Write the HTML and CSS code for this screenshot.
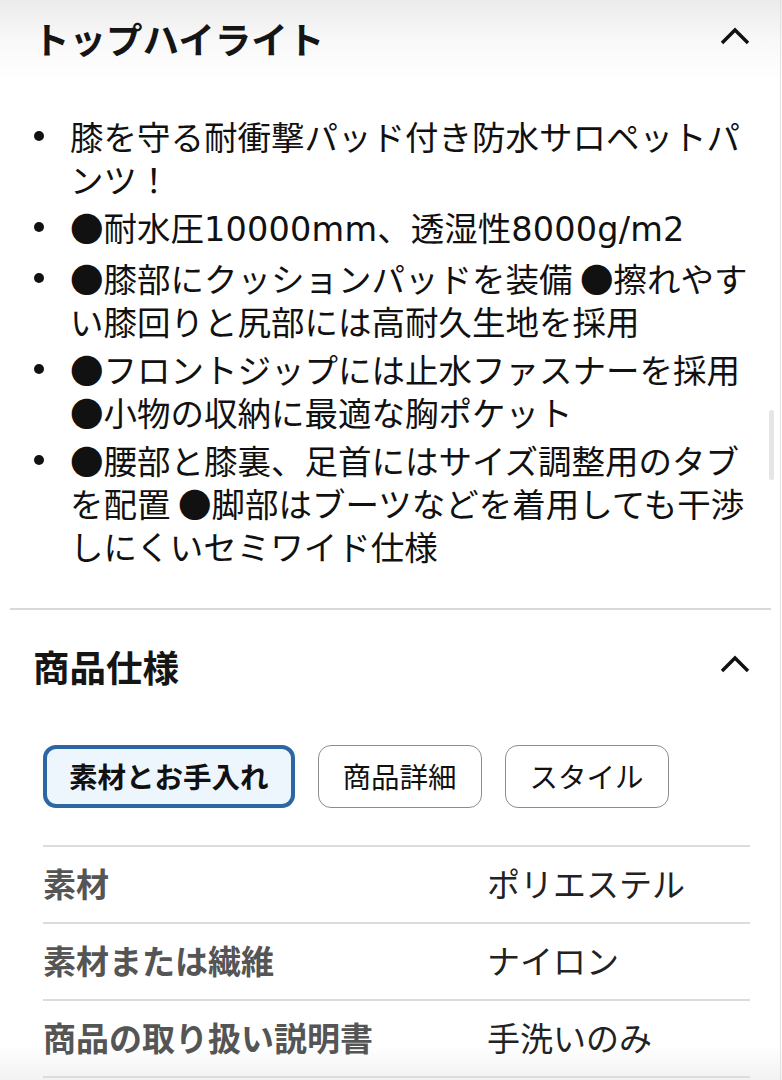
FILE: index.html
```html
<!DOCTYPE html>
<html lang="ja">
<head>
<meta charset="utf-8">
<link rel="stylesheet" href="styles.css">
</head>
<body>
<div class="page">
  <section class="sec sec-hl">
    <div class="sec-head">
      <h2 class="sec-title">トップハイライト</h2>
      <svg class="chev" width="30" height="20" viewBox="0 0 30 20"><path d="M2 17 L15 4 L28 17" fill="none" stroke="#111" stroke-width="3.4"/></svg>
    </div>
    <ul class="hl-list">
      <li>膝を守る耐衝撃パッド付き防水サロペットパンツ！</li>
      <li>●耐水圧<span class="lat">10000mm</span>、透湿性<span class="lat">8000g/m2</span></li>
      <li>●膝部にクッションパッドを装備 ●擦れやすい膝回りと尻部には高耐久生地を採用</li>
      <li>●フロントジップには止水ファスナーを採用 ●小物の収納に最適な胸ポケット</li>
      <li>●腰部と膝裏、足首にはサイズ調整用のタブを配置 ●脚部はブーツなどを着用しても干渉しにくいセミワイド仕様</li>
    </ul>
  </section>
  <hr class="divider">
  <section class="sec sec-spec">
    <div class="sec-head">
      <h2 class="sec-title">商品仕様</h2>
      <svg class="chev" width="30" height="20" viewBox="0 0 30 20"><path d="M2 17 L15 4 L28 17" fill="none" stroke="#111" stroke-width="3.4"/></svg>
    </div>
    <div class="tabs">
      <button class="tab active">素材とお手入れ</button>
      <button class="tab">商品詳細</button>
      <button class="tab">スタイル</button>
    </div>
    <div class="spec-table">
      <div class="row"><div class="lbl">素材</div><div class="val">ポリエステル</div></div>
      <div class="row"><div class="lbl">素材または繊維</div><div class="val">ナイロン</div></div>
      <div class="row"><div class="lbl">商品の取り扱い説明書</div><div class="val">手洗いのみ</div></div>
    </div>
  </section>
</div>
<div class="scroll-edge"></div>
<div class="scroll-thumb"></div>
</body>
</html>
```
FILE: styles.css
```css
html, body {
  margin: 0;
  padding: 0;
}
body {
  font-family: "Noto Sans CJK JP", "Noto Sans", sans-serif;
  color: #111;
  width: 782px;
  height: 1080px;
  overflow: hidden;
  position: relative;
  background: linear-gradient(to bottom, #ebebeb 0px, #f8f8f8 40px, #ffffff 80px, #ffffff 1045px, #f2f2f2 1080px);
}
.page {
  padding: 0 32px 0 0;
}
.sec {
  padding-left: 33px;
}
.sec-head {
  display: flex;
  align-items: center;
  justify-content: space-between;
}
.sec-hl .sec-head {
  height: 78px;
}
.sec-title {
  margin: 0;
  font-size: 36.5px;
  font-weight: 700;
  line-height: 1;
  color: #151515;
}
.chev {
  display: block;
  margin-top: -6px;
}
.hl-list {
  list-style: none;
  margin: 0;
  padding: 36px 0 0 37px;
  font-size: 33.5px;
  line-height: 43px;
}
.hl-list li {
  position: relative;
  margin-bottom: 5px;
}
.hl-list li::before {
  content: "";
  position: absolute;
  left: -36px;
  top: 17px;
  width: 10px;
  height: 10px;
  border-radius: 50%;
  background: #111;
}
.lat {
  font-family: "DejaVu Sans", "Noto Sans", sans-serif;
  font-weight: 400;
  letter-spacing: 0.2px;
}
.divider {
  border: 0;
  height: 2px;
  background: #d9d9d9;
  margin: 41px 0 0 10px;
  width: 761px;
}
.sec-spec .sec-head {
  height: 114px;
}
.tabs {
  display: flex;
  gap: 23px;
  margin-top: 21px;
  padding-left: 10px;
}
.tab {
  font-family: inherit;
  font-size: 28.5px;
  color: #111;
  background: #fff;
  border: 1.5px solid #8c8c8c;
  border-radius: 13px;
  height: 63px;
  padding: 0 24px;
  line-height: 1;
  cursor: pointer;
}
.tab.active {
  background: #eef6fd;
  border: 4px solid #2c67a3;
  font-weight: 700;
  padding: 0 22px;
}
.spec-table {
  margin: 37px 0 0 10px;
  width: 707px;
  border-top: 2px solid #dcdcdc;
}
.row {
  display: flex;
  align-items: center;
  height: 75px;
  border-bottom: 2px solid #dcdcdc;
  font-size: 33px;
}
.lbl {
  width: 444px;
  color: #555;
  font-weight: 700;
  margin-top: -3px;
}
.val {
  color: #222;
  margin-top: -3px;
}
.scroll-edge {
  position: absolute;
  right: 1px;
  top: 0;
  width: 1px;
  height: 1080px;
  background: #e2e2e2;
}
.scroll-thumb {
  position: absolute;
  left: 769px;
  top: 410px;
  width: 5px;
  height: 70px;
  border-radius: 3px;
  background: #e6e6e6;
}
```
